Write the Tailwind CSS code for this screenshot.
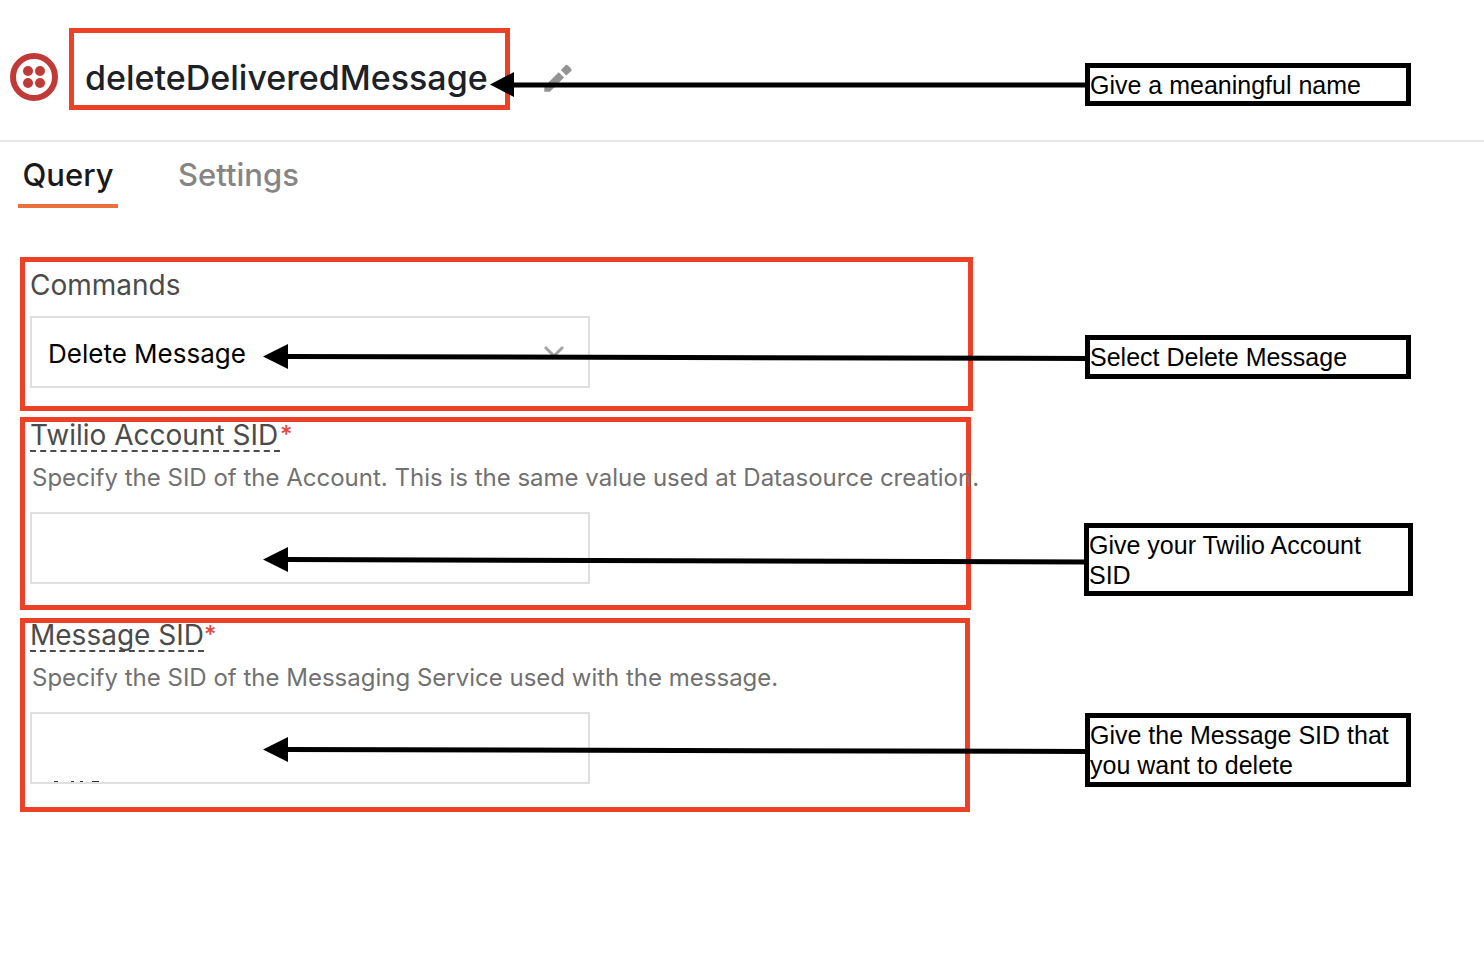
<!DOCTYPE html>
<html lang="en">
<head>
<meta charset="utf-8">
<meta name="viewport" content="width=device-width, initial-scale=1">
<title>deleteDeliveredMessage</title>
<script src="https://cdn.jsdelivr.net/npm/@tailwindcss/browser@4"></script>
</head>
<body class="relative min-h-screen overflow-x-hidden bg-white font-['Inter',sans-serif] text-[#4b4b4b]">

<header class="flex items-start border-b-2 border-[#e7e7e7] pt-7 pb-[30px] pl-[10px]">
  <svg class="mt-[25px] h-12 w-12 shrink-0" viewBox="0 0 48 48" role="img" aria-label="Twilio">
    <circle cx="24" cy="24" r="21" fill="none" stroke="#c03a37" stroke-width="6"/>
    <g fill="#c03a37"><circle cx="18" cy="18" r="5"/><circle cx="30" cy="18" r="5"/><circle cx="18" cy="30" r="5"/><circle cx="30" cy="30" r="5"/></g>
  </svg>
  <div class="ml-[11px] flex h-[82px] w-[441px] shrink-0 items-center border-[5px] border-[#ec4127] pt-[18px] pl-[11px]">
    <h1 class="text-[34px] leading-[44px] font-medium whitespace-nowrap text-[#1b2126]">deleteDeliveredMessage</h1>
  </div>
  <button type="button" aria-label="Edit name" class="mt-8 ml-[30px] h-9 w-9">
    <svg class="h-9 w-9" viewBox="0 0 36 36" fill="#939393"><path d="M4.300 26.400 L18.700 12.300 L24 17.600 L9.900 31.700 H4.300 Z M20.900 10.100 L25.200 5.500 Q26.600 4.200 28 5.500 L31 8.500 Q32.300 9.900 31 11.300 L26.300 15.600 Z"/></svg>
  </button>
</header>

<main>
  <nav class="flex gap-[54px] pl-[18px]">
    <button type="button" class="h-[66px] w-[100px] border-b-4 border-[#ea6f3c] pt-1 text-[31px] leading-[40px] font-medium text-[#191919]">Query</button>
    <button type="button" class="h-[66px] border-b-4 border-transparent px-[6px] pt-1 text-[31px] leading-[40px] font-medium text-[#858585]">Settings</button>
  </nav>

  <form class="mt-[49px] flex flex-col pl-5">
    <section class="h-[154px] w-full max-w-[953px] border-[5px] border-[#ec4127] pt-1 pl-[5px]">
      <label for="command" class="block text-[28px] leading-[38px]">Commands</label>
      <div class="relative mt-3 w-[560px] max-w-full">
        <select id="command" class="h-[72px] w-full appearance-none border-2 border-[#dfdfdf] bg-white pt-[2px] pl-4 text-[26px] text-black">
          <option>Delete Message</option>
        </select>
        <svg class="pointer-events-none absolute top-[28px] right-[26px] h-5 w-5" viewBox="0 0 20 20" fill="none" stroke="#a3a3a3" stroke-width="3"><path d="M1 3 L10 12 L19 3"/></svg>
      </div>
    </section>

    <section class="mt-[6px] h-[193px] w-full max-w-[951px] border-[5px] border-[#ec4127] pl-[5px] whitespace-nowrap">
      <div class="flex">
        <label for="account" class="h-[30px] min-w-[250px] border-b-2 border-dashed border-[#4b4b4b] text-[28px] leading-[26px]">Twilio Account SID</label>
        <span class="text-[24px] leading-[26px] font-medium text-[#e4483a]">*</span>
      </div>
      <p id="account-help" class="mt-[8px] pl-[2px] text-[24px] leading-[36px] text-[#717171]">Specify the SID of the Account. This is the same value used at Datasource creation.</p>
      <input id="account" type="text" required aria-describedby="account-help" class="mt-4 h-[72px] w-[560px] max-w-full border-2 border-[#dfdfdf] bg-transparent px-4 text-[26px] text-black">
    </section>

    <section class="mt-[8px] h-[194px] w-full max-w-[950px] border-[5px] border-[#ec4127] pl-[5px] whitespace-nowrap">
      <div class="flex">
        <label for="message" class="h-[29px] border-b-2 border-dashed border-[#4b4b4b] text-[28px] leading-[24px]">Message SID</label>
        <span class="text-[24px] leading-[24px] font-medium text-[#e4483a]">*</span>
      </div>
      <p id="message-help" class="mt-[8px] pl-[2px] text-[24px] leading-[36px] text-[#717171]">Specify the SID of the Messaging Service used with the message.</p>
      <div class="relative mt-4 w-[560px] max-w-full">
        <input id="message" type="text" required aria-describedby="message-help" class="block h-[72px] w-full border-2 border-[#dfdfdf] bg-transparent px-4 text-[26px] text-black">
        <svg class="pointer-events-none absolute bottom-[2px] left-6 h-px w-12" viewBox="0 0 48 1" fill="#333" aria-hidden="true"><path d="M0 0h4v1h-4z M17 0h3v1h-3z M26 0h3v1h-3z M38 0h7v1h-7z"/></svg>
      </div>
    </section>
  </form>
</main>

<aside class="font-['Liberation_Sans',sans-serif] text-[25px] leading-[30px] text-black">
  <p class="absolute top-[63px] left-[1085px] h-[43px] w-[326px] border-[5px] border-black bg-white pt-[2px]">Give a meaningful name</p>
  <p class="absolute top-[335px] left-[1085px] h-[44px] w-[326px] border-[5px] border-black bg-white pt-[2px]">Select Delete Message</p>
  <p class="absolute top-[523px] left-[1084px] h-[73px] w-[329px] border-[5px] border-black bg-white pt-[2px]">Give your Twilio Account<br>SID</p>
  <p class="absolute top-[713px] left-[1085px] h-[74px] w-[326px] border-[5px] border-black bg-white pt-[2px]">Give the Message SID that<br>you want to delete</p>
</aside>

<!-- Arrows from the callouts to the fields -->
<svg class="pointer-events-none absolute top-0 left-0 h-[960px] w-[1484px]" viewBox="0 0 1484 960" fill="#000" stroke="#000" stroke-width="5" aria-hidden="true">
  <path d="M512 85 L1088 85 M286 356.500 L1089 358.500 M286 559.500 L1089 562 M286 749.500 L1089 751.500"/>
  <path stroke="none" d="M490 84.500 L514 72 V97 Z M263 356.500 L288 344 V369 Z M263 559.500 L288 547 V572 Z M263 749.500 L288 737 V762 Z"/>
</svg>
</body>
</html>
